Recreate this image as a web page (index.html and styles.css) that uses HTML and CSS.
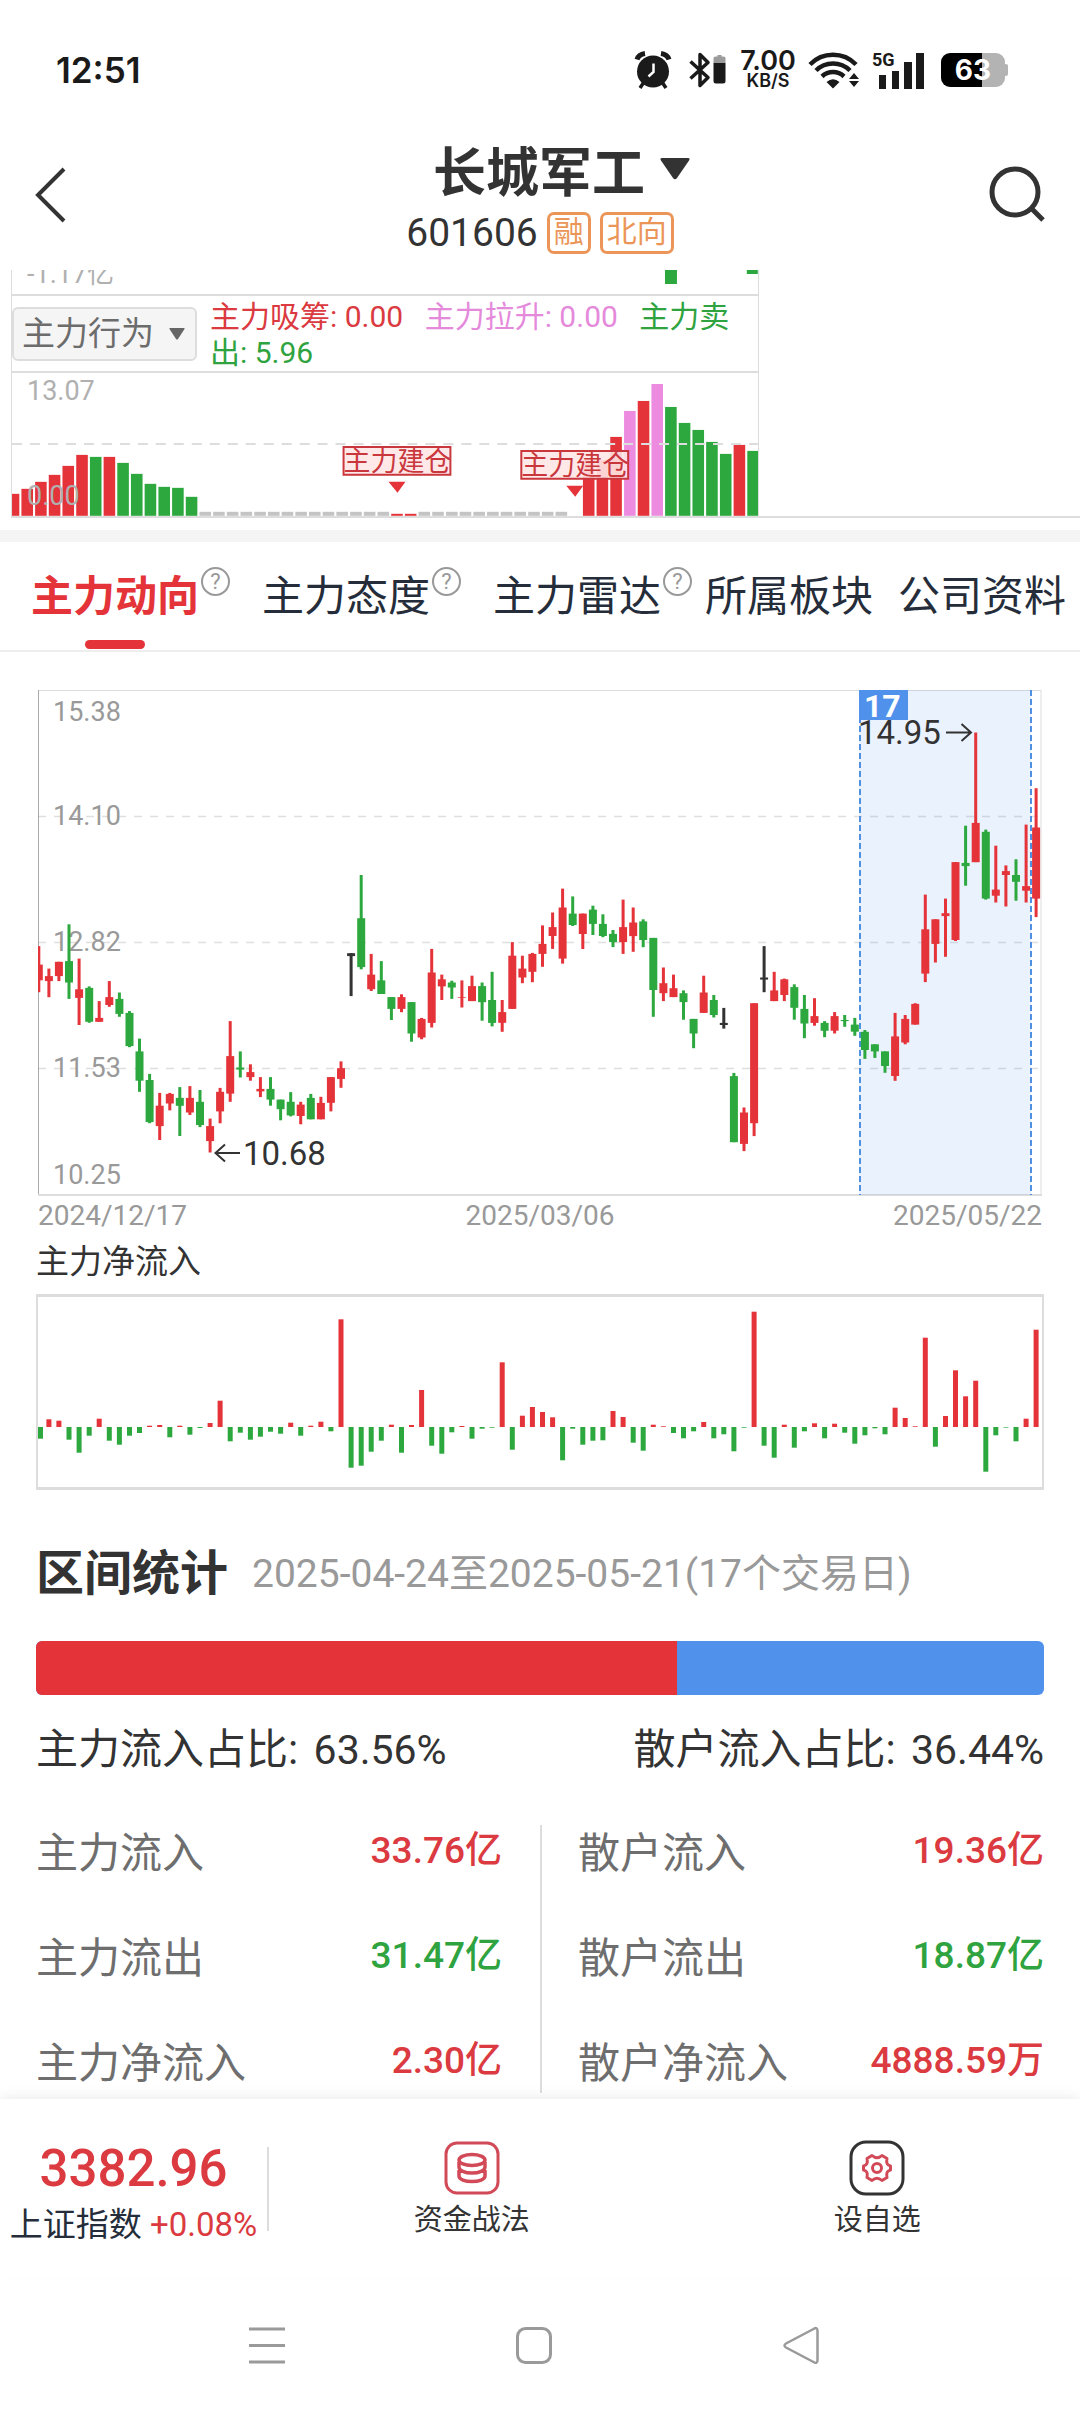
FILE: index.html
```html
<!DOCTYPE html>
<html lang="zh-CN">
<head>
<meta charset="utf-8">
<meta name="viewport" content="width=device-width, initial-scale=1">
<title>长城军工 601606</title>
<link rel="stylesheet" href="styles.css">
</head>
<body>
<div class="status">
  <span class="status-time">12:51</span>
  <div class="status-icons">
    <svg class="ic-alarm" width="38" height="38" viewBox="0 0 38 38" aria-hidden="true"><g fill="none" stroke="#1a1a1a"><path d="M3 8.500A10 8 0 0 1 11 2.500M27 2.500A10 8 0 0 1 35 8.500" stroke-width="5"/><path d="M10 31l-4 6M28 31l4 6" stroke-width="3.500"/></g><circle cx="19" cy="20.500" r="16" fill="#1a1a1a"/><path d="M19.500 12.500v8.500l-5 4.500" fill="none" stroke="#fff" stroke-width="2.500"/></svg>
    <svg class="ic-bt" width="37" height="38" viewBox="0 0 37 38" aria-hidden="true"><path d="M1.500 10.500L19 26.500 11 34.500V3.500L19 11.500 1.500 27.500" fill="none" stroke="#1a1a1a" stroke-width="3.500" stroke-linejoin="round"/><path d="M24.500 12V7q0-1.500 2-1.500h2V4h4v1.500h2q2 0 2 1.500v5z" fill="#9b9b9b"/><path d="M24.500 12h12v18q0 2.500-2.500 2.500h-7q-2.500 0-2.500-2.500z" fill="#1a1a1a"/></svg>
    <span class="status-speed"><b>7.00</b><small>KB/S</small></span>
    <svg class="ic-wifi" width="51" height="38" viewBox="0 0 51 38" aria-hidden="true"><g fill="none" stroke="#1a1a1a" stroke-width="4.500"><path d="M2 13.500A32 32 0 0 1 48 13.500M8 19.500A24 24 0 0 1 42 19.500M14 25.500A16 16 0 0 1 36 25.500"/></g><path d="M18.500 31q6.500-5.500 13 0L25 37.500zM46 22l5 6h-10zM46 36l5-6h-10z" fill="#1a1a1a"/></svg>
    <span class="status-signal"><span>5G</span><svg width="52" height="38" viewBox="0 0 52 38" aria-hidden="true"><path d="M7 24h7v14H7zM20 20h7v18h-7zM32 11h8v27h-8zM44 2h8v36h-8z" fill="#1a1a1a"/></svg></span>
    <span class="status-battery">63</span>
  </div>
</div>

<header class="head">
  <button class="icon-btn" aria-label="返回"><svg width="32" height="58" viewBox="0 0 32 58"><path d="M29 3L3 29l26 26" fill="none" stroke="#333" stroke-width="4"/></svg></button>
  <div class="head-mid">
    <button class="stock">长城军工<svg width="32" height="23" viewBox="0 0 32 23"><path d="M3 1h26q2.500 0 1 2.500L18 21q-2 2.500-4 0L2 3.500Q.5 1 3 1z" fill="#333"/></svg></button>
    <div class="stock-sub"><span class="code">601606</span><span class="badge">融</span><span class="badge">北向</span></div>
  </div>
  <button class="icon-btn" aria-label="搜索"><svg width="56" height="56" viewBox="0 0 56 56"><circle cx="26" cy="26" r="23" fill="none" stroke="#333" stroke-width="5"/><path d="M42 42l12 12" stroke="#333" stroke-width="5"/></svg></button>
</header>

<main>
<section class="indicator">
  <div class="indicator-body">
    <div class="prev-pane">
      <span>-1.17亿</span>
      <svg viewBox="0 0 747 25" aria-hidden="true"><path d="M654 0h12v14h-12zM736 0h11v4h-11z" fill="#2da83f"/></svg>
    </div>
    <div class="legend-row">
      <label class="picker">
        <select aria-label="指标"><option>主力行为</option></select>
        <svg width="16" height="12" viewBox="0 0 16 12" aria-hidden="true"><path d="M1 0h14q1 0 .5 1L9 11q-1 1-2 0L.5 1Q0 0 1 0z" fill="#666"/></svg>
      </label>
      <p class="legend"><span class="red">主力吸筹: 0.00</span> <span class="pink">主力拉升: 0.00</span> <span class="green">主力卖出: 5.96</span></p>
    </div>
    <svg class="plot" id="behaviour" viewBox="0 1 747 143" role="img" aria-label="主力行为">
      <text class="axis-light" x="15" y="28">13.07</text>
      <g id="behaviour-bars"></g>
      <path class="grid grid-bold" d="M0 72H747"/>
      <text class="axis-light" x="15" y="133">0.00</text>
      <g class="flag">
        <path d="M332 75h107v28H332zM510 79h107v28H510z"/>
        <text x="332" y="99">主力建仓</text><text x="510" y="103">主力建仓</text>
      </g>
      <path d="M377 110h17l-8 11zM555 114h17l-8 11z" fill="#e4343a"/>
    </svg>
  </div>
</section>

<nav class="tabs">
  <a href="#trend" class="tab on" aria-current="page">主力动向<span class="help"></span></a>
  <a href="#attitude" class="tab">主力态度<span class="help"></span></a>
  <a href="#radar" class="tab">主力雷达<span class="help"></span></a>
  <a href="#sector" class="tab">所属板块</a>
  <a href="#company" class="tab">公司资料</a>
</nav>

<section class="trend" id="trend">
  <div class="kline">
    <svg class="plot" viewBox="0 0 1004 507" role="img" aria-label="日K线">
      <path class="frame" d="M1 1.500H1003M1003 1V506"/><path class="frame frame-dark" d="M.5 1V506"/><path class="frame frame-base" d="M0 506H1004"/>
      <path class="grid" d="M0 127.500H1003M0 253.500H1003M0 379.500H1003"/>
      <rect x="821" y="1" width="172" height="505" fill="#4f91eb" fill-opacity=".12"/>
      <g class="axis">
        <text x="15" y="32">15.38</text><text x="15" y="136">14.10</text><text x="15" y="262">12.82</text><text x="15" y="388">11.53</text><text x="15" y="495">10.25</text>
      </g>
      <path class="range" d="M822 1V506M993 1V506"/>
      <g id="candles"></g>
      <rect x="821" y="1" width="49" height="30" fill="#4f91eb"/>
      <text class="days" x="826" y="28">17</text>
      <g class="mark"><text x="820" y="55">14.95</text><text x="205" y="476">10.68</text>
      <path d="M908 43.500h25M923.500 35l9.500 8.500-9.500 8.500M202 464h-25M187 455.500l-9.500 8.500 9.500 8.500"/></g>
    </svg>
    <div class="dates"><span>2024/12/17</span><span>2025/03/06</span><span>2025/05/22</span></div>
  </div>
  <h2 class="flow-title">主力净流入</h2>
  <div class="flow-box"><svg class="plot" id="flow" viewBox="0 0 1004 190" role="img" aria-label="主力净流入"></svg></div>

  <div class="range-head"><h2>区间统计</h2><span>2025-04-24至2025-05-21(17个交易日)</span></div>
  <div class="ratio-bar"><i style="width:63.56%"></i></div>
  <div class="ratio-text"><span>主力流入占比: <b>63.56%</b></span><span>散户流入占比: <b>36.44%</b></span></div>
  <div class="stats">
    <dl>
      <div><dt>主力流入</dt><dd class="red">33.76亿</dd></div>
      <div><dt>主力流出</dt><dd class="green">31.47亿</dd></div>
      <div><dt>主力净流入</dt><dd class="red">2.30亿</dd></div>
    </dl>
    <dl>
      <div><dt>散户流入</dt><dd class="red">19.36亿</dd></div>
      <div><dt>散户流出</dt><dd class="green">18.87亿</dd></div>
      <div><dt>散户净流入</dt><dd class="red">4888.59万</dd></div>
    </dl>
  </div>
</section>
</main>

<footer class="dock">
  <a href="#index" class="index"><strong>3382.96</strong><span>上证指数 <em>+0.08%</em></span></a>
  <button class="action"><svg width="56" height="56" viewBox="0 0 56 56" fill="none" stroke="#d24a58" stroke-width="3"><rect x="2" y="3" width="52" height="50" rx="11"/><g stroke-width="3.500"><ellipse cx="28" cy="20" rx="13" ry="5.500"/><path d="M15 22v5c0 3.500 6 6 13 6s13-2.500 13-6v-5M15 30v6c0 3.500 6 5.500 13 5.500s13-2 13-5.500v-6"/></g></svg>资金战法</button>
  <button class="action"><svg width="56" height="56" viewBox="0 0 56 56" fill="none" stroke="#333" stroke-width="3"><rect x="2" y="2" width="52" height="52" rx="15"/><g stroke="#d24a58"><circle cx="28" cy="28" r="4.500"/><path stroke-linejoin="round" d="M23 15.500Q28 20 33 15.500L38 18.500Q36.500 25 41.500 26V30Q36.500 31 38 37.500L33 40.500Q28 36 23 40.500L18 37.500Q19.500 31 14.500 30V26Q19.500 25 18 18.500Z"/></g></svg>设自选</button>
</footer>
<div class="sysnav">
  <button aria-label="最近任务"><svg width="36" height="38" viewBox="0 0 36 38"><path d="M0 3h36M0 19.500h36M0 36h36" stroke="#9a9a9a" stroke-width="3"/></svg></button>
  <button aria-label="主页"><svg width="36" height="38" viewBox="0 0 36 38"><rect x="1.500" y="2.500" width="33" height="34" rx="8" fill="none" stroke="#9a9a9a" stroke-width="3"/></svg></button>
  <button aria-label="返回上一级"><svg width="36" height="38" viewBox="0 0 36 38"><path d="M30.500 3Q34.500.5 34.500 5v29q0 4.500-4 2L3 21.500q-3-2 0-4z" fill="none" stroke="#9a9a9a" stroke-width="2.500"/></svg></button>
</div>
<script src="charts.js"></script>
</body>
</html>
```
FILE: styles.css
```css
* { box-sizing: border-box; }
body {
  margin: 0;
  background: #fff;
  color: #333;
  font-family: Roboto, "Noto Sans CJK SC", sans-serif;
  overflow-x: hidden;
}
button, select { font: inherit; color: inherit; border: 0; background: none; padding: 0; margin: 0; }
a { color: inherit; text-decoration: none; }
h2, p, dl, dd { margin: 0; }
svg { display: block; flex: none; }
.plot { width: 100%; height: auto; }
.red { color: #da3a40; }
.green { color: #2fa340; }
.pink { color: #e58adb; }

/* status bar */
.status { display: flex; justify-content: space-between; align-items: center; height: 140px; padding: 0 75px 0 56px; color: #1a1a1a; }
.status-time { font: 600 35px/40px Inter, sans-serif; }
.status-icons { display: flex; align-items: center; }
.ic-alarm { margin-right: 17px; }
.ic-bt { margin-right: 14px; }
.status-speed { display: flex; flex-direction: column; align-items: center; width: 56px; margin-right: 12px; font-family: Inter, sans-serif; }
.status-speed b { font-size: 27px; line-height: 22px; font-weight: 600; }
.status-speed small { font-size: 18px; line-height: 18px; font-weight: 600; }
.ic-wifi { margin-right: 13px; }
.status-signal { position: relative; margin-right: 17px; }
.status-signal span { position: absolute; left: 0; top: 0; font: 700 18px/18px Roboto, sans-serif; }
.status-battery { width: 64px; height: 34px; border-radius: 9px; background: linear-gradient(90deg, #000 64%, #b3b3b3 64%); color: #fff; font: 700 28px/34px Inter, sans-serif; text-align: center; position: relative; }
.status-battery::after { content: ""; position: absolute; right: -3px; top: 11px; width: 4px; height: 12px; border-radius: 2px; background: #b3b3b3; }

/* header */
.head { display: grid; grid-template-columns: 1fr auto 1fr; height: 130px; padding: 0 35px; }
.icon-btn { align-self: start; margin-top: 26px; justify-self: start; }
.icon-btn:last-child { justify-self: end; }
.head-mid { display: flex; flex-direction: column; align-items: center; padding-top: 4px; }
.stock { display: flex; align-items: center; gap: 14px; margin-left: 44px; font-size: 53px; line-height: 60px; font-weight: 700; }
.stock svg { margin-bottom: 12px; }
.stock-sub { display: flex; align-items: center; gap: 9px; margin-top: 8px; font-size: 39px; line-height: 42px; }
.badge { border: 3px solid #eb9658; border-radius: 7px; padding: 0 4px; font-size: 30px; line-height: 34px; height: 42px; color: #eb9658; }

/* indicator pane */
.indicator { display: grid; grid-template-columns: 748fr 321fr; padding-left: 11px; }
.indicator::after { content: ""; border-bottom: 2px solid #ddd; }
.indicator-body { border-left: 1px solid #ddd; border-right: 1px solid #ddd; border-bottom: 2px solid #ddd; }
.prev-pane { position: relative; display: flex; align-items: flex-end; height: 26px; overflow: hidden; border-bottom: 2px solid #ddd; }
.prev-pane span { font-size: 27px; line-height: 27px; padding: 0 0 6px 15px; color: #b0b0b0; }
.prev-pane svg { position: absolute; left: 0; top: 0; width: 100%; }
.legend-row { display: flex; align-items: flex-start; height: 77px; border-bottom: 2px solid #ddd; }
.picker { position: relative; flex: none; margin-top: 11px; }
.picker select { appearance: none; width: 185px; height: 54px; padding-left: 8px; border: 2px solid #ddd; border-radius: 6px; background: #f5f5f5; color: #6c6c6c; font-size: 33px; line-height: 50px; }
.picker svg { position: absolute; right: 12px; top: 21px; }
.legend { margin: 3px 0 0 13px; font-size: 30px; line-height: 36px; }
.legend span + span { margin-left: 14px; }
.grid { fill: none; stroke: rgba(120, 120, 120, .24); stroke-width: 1.5; stroke-dasharray: 8 8; }
.grid-bold { stroke: #ddd; stroke-width: 2; stroke-dasharray: 10 8; }
.axis-light { font-size: 27px; fill: #b0b0b0; }
.flag path { fill: #ffe6e6; fill-opacity: .9; stroke: #c9373d; stroke-width: 2; }
.flag text { font-size: 27px; fill: #c9373d; }

/* tabs */
.tabs { display: flex; height: 122px; margin-top: 12px; padding: 34px 0 0 31px; border-top: 12px solid #f4f4f4; border-bottom: 2px solid #eee; color: #252d3a; }
.tab { position: relative; display: flex; font-size: 42px; line-height: 42px; white-space: nowrap; margin-right: 32px; }
.tab:nth-child(3) { margin-right: 13px; }
.tab:nth-child(4) { margin-right: 25px; }
.tab:nth-child(5) { margin-right: 0; }
.help { width: 29px; height: 29px; margin: -9px 0 0 2px; border: 2px solid #999; border-radius: 50%; color: #999; font-size: 22px; line-height: 25px; text-align: center; font-weight: 400; }
.help::before { content: "?"; }
.on { color: #e4343a; font-weight: 700; }
.on::after { content: ""; position: absolute; left: 54px; bottom: 1px; width: 60px; height: 9px; border-radius: 5px; background: #e4343a; }

/* trend charts */
.trend { padding: 37px 36px 6px; }
.kline { padding: 0 2px; }
.frame { fill: none; stroke: #ddd; stroke-width: 1; }
.frame-dark { stroke: #aaa; }
.frame-base { stroke-width: 2; }
.axis { font-size: 27px; fill: #999; }
.range { fill: none; stroke: #4f91e0; stroke-width: 2; stroke-dasharray: 6 3; }
.days { font-size: 32px; font-weight: 700; fill: #fff; }
.mark { font-size: 33px; fill: #333; }
.mark path { fill: none; stroke: #333; stroke-width: 2; }
.dates { display: flex; justify-content: space-between; margin-top: 4px; font-size: 28px; line-height: 32px; color: #999; }
.flow-title { margin: 10px 0 12px; font-size: 33px; line-height: 40px; font-weight: 400; }
.flow-box { border: solid #ddd; border-width: 3px 2px; }

/* range statistics */
.range-head { display: flex; align-items: center; gap: 24px; margin-top: 60px; white-space: nowrap; }
.range-head h2 { font-size: 48px; line-height: 48px; font-weight: 700; }
.range-head span { font-size: 39px; line-height: 48px; color: #999; }
.ratio-bar { height: 54px; margin-top: 43px; border-radius: 6px; background: #4f91eb; overflow: hidden; }
.ratio-bar i { display: block; height: 100%; background: #e4343a; }
.ratio-text { display: flex; justify-content: space-between; margin-top: 34px; font-size: 42px; line-height: 42px; }
.ratio-text b { margin-left: 5px; font-size: 41px; font-weight: 400; }
.stats { display: grid; grid-template-columns: 1fr 1fr; margin-top: 54px; }
.stats dl { display: flex; flex-direction: column; gap: 47px; padding-right: 38px; }
.stats dl + dl { padding: 0 0 0 36px; border-left: 2px solid #ddd; }
.stats dl div { display: flex; justify-content: space-between; line-height: 58px; }
.stats dt { font-size: 42px; color: #6e6e6e; }
.stats dd { font-size: 37px; font-weight: 500; margin-top: -3px; }

/* bottom dock */
.dock { position: relative; display: flex; align-items: center; height: 180px; background: #fff; box-shadow: 0 0 14px rgba(0, 0, 0, .1); clip-path: inset(-14px 0 0 0); }
.index { display: flex; flex-direction: column; align-items: center; width: 269px; height: 84px; justify-content: center; padding-top: 16px; border-right: 2px solid #ddd; color: #252d3a; }
.index strong { font-size: 51px; line-height: 56px; font-weight: 500; color: #da3a40; }
.index span { font-size: 33px; line-height: 56px; white-space: nowrap; }
.index em { font-style: normal; color: #da3a40; }
.action { flex: 1; display: flex; flex-direction: column; align-items: center; gap: 6px; font-size: 29px; line-height: 36px; }
.sysnav { display: flex; justify-content: center; gap: 231px; height: 132px; padding: 47px 12px 0 0; }
.sysnav button { align-self: flex-start; }
```
FILE: charts.js
```js
const RED = '#e4343a', GREEN = '#2da83f', PINK = '#ed8be0', GREY = '#c4c4c4', BLACK = '#333';
const COLORS = { r: RED, g: GREEN, p: PINK, k: BLACK, n: GREY };

function rect(parent, x, y, w, h, fill) {
  const el = document.createElementNS('http://www.w3.org/2000/svg', 'rect');
  el.setAttribute('x', x.toFixed(1));
  el.setAttribute('y', y.toFixed(1));
  el.setAttribute('width', w);
  el.setAttribute('height', Math.max(h, 0.6).toFixed(1));
  el.setAttribute('fill', fill);
  parent.appendChild(el);
}

const STEP = 10.074;

// Each candle: colour, wick top, body top, body bottom, wick bottom.
const candles = `r745,797,841,874 r808,829,843,888 r789,789,829,843 g684,787,847,893 r780,866,890,966
g858,862,957,960 r899,946,957,957 r843,888,910,915 g875,893,935,943 g927,932,1025,1028
g1004,1040,1122,1153 g1103,1120,1238,1241 r1156,1192,1249,1288 r1156,1159,1186,1205 g1140,1170,1192,1277
r1137,1170,1211,1218 g1148,1181,1246,1252 r1228,1249,1291,1323 r1142,1153,1208,1241 r955,1053,1158,1181
g1040,1085,1091,1113 r1076,1098,1112,1122 r1112,1145,1152,1168 g1112,1145,1175,1192 g1175,1175,1202,1233
g1154,1181,1219,1222 r1181,1189,1221,1244 g1159,1170,1230,1230 r1167,1184,1230,1230 r1112,1112,1184,1208
r1068,1087,1117,1142 k765,765,773,885 g546,667,804,810 r767,825,866,871 g787,841,879,879
g888,888,921,952 r880,888,921,930 g902,902,990,1013 r946,949,1001,1006 r753,819,960,973
r825,838,858,896 g842,847,861,893 r841,888,890,917 r828,857,899,899 g847,857,902,954
g817,896,960,970 r896,930,960,985 r734,772,921,921 r772,808,833,849 r764,767,817,846
r687,739,767,803 r651,692,717,753 r584,637,780,794 g606,654,686,689 r654,654,711,753
g632,643,683,714 g656,683,717,720 g700,711,734,748 r615,692,734,767 r637,679,717,761
g670,676,728,748 g722,722,868,943 r805,849,877,899 r825,863,888,888 g869,877,902,951
g949,949,990,1031 r828,875,932,932 g882,896,938,945 k918,960,966,976 g1100,1109,1294,1294
r1197,1211,1299,1319 r905,905,1241,1277 k745,833,839,874 r817,869,899,899 r836,838,882,899
g852,860,918,951 g882,921,962,1003 r891,941,960,968 g955,960,982,1000 r930,941,982,990
g938,952,955,971 g946,965,985,996 g980,985,1036,1061 g1020,1020,1040,1058 g1040,1040,1081,1100
r932,998,1109,1122 r938,949,1015,1020 r905,907,965,965 r601,698,822,846 r670,670,739,791
r612,653,661,775 r510,510,728,731 g408,512,521,576 r147,400,510,510 g419,425,612,615
r464,587,604,623 r519,535,546,634 g502,546,565,618 r405,577,590,623 r303,413,612,664`.split(/\s+/);

const candleLayer = document.getElementById('candles');
candles.forEach((c, i) => {
  const [high, top, bottom, low] = c.slice(1).split(',').map(v => v / 2.8 - 9);
  const x = 0.8 + i * STEP;
  const color = COLORS[c[0]];
  rect(candleLayer, x - 1.5, high, 3, low - high, color);
  const left = Math.max(x - 4, 0);
  rect(candleLayer, left, top, x + 4 - left, bottom - top, color);
});

// Net main-force inflow per day, above or below the zero line.
const flow = [-35, 23, 19, -38, -77, -26, 25, -41, -53, -26, -18, 4, 6, -31, 4, -23, -3, 12, 79, -43,
  -17, -38, -29, -14, -20, 13, -26, 4, 16, -13, 323, -122, -116, -74, -41, 7, -77, 6, 111, -56,
  -80, -16, 3, -35, -5, -2, 194, -68, 34, 60, 45, 29, -100, -5, -53, -41, -40, 48, 30, -47,
  -71, 7, 2, -18, -34, -13, 15, -34, -22, -73, -2, 346, -56, -92, 7, -62, -13, 11, -34, 10,
  -17, -50, -25, -4, -22, 58, 27, 2, 268, -59, 33, 170, 92, 139, -134, -25, -1, -43, 25, 292];
const flowSvg = document.getElementById('flow');
flow.forEach((v, i) => {
  const h = Math.abs(v) / 3;
  const left = Math.max(0.8 + i * STEP - 2.5, 0);
  rect(flowSvg, left, v > 0 ? 130 - h : 130, 5, h, v > 0 ? RED : GREEN);
});

// Main-force behaviour bars: colour and height.
const behaviour = ['r22', 'r27', 'r34', 'r41', 'r50', 'r61', 'g59', 'r59', 'g53', 'g42', 'g32', 'g29', 'g28', 'g19',
  ...Array(14).fill('n4'), 'r2', 'r2', ...Array(11).fill('n4'), 'n0',
  'r56', 'r56', 'r79', 'p105', 'r115', 'p132', 'g109', 'g93', 'g86', 'g74', 'g62', 'r71', 'g65'];
const behaviourLayer = document.getElementById('behaviour-bars');
behaviour.forEach((b, i) => {
  const h = Number(b.slice(1));
  if (!h) return;
  const x = 9.4 + (i - 1) * 13.715;
  const left = Math.max(x, 0);
  rect(behaviourLayer, left, 144 - h, (x + 11.6 - left).toFixed(1), h, COLORS[b[0]]);
});
```
